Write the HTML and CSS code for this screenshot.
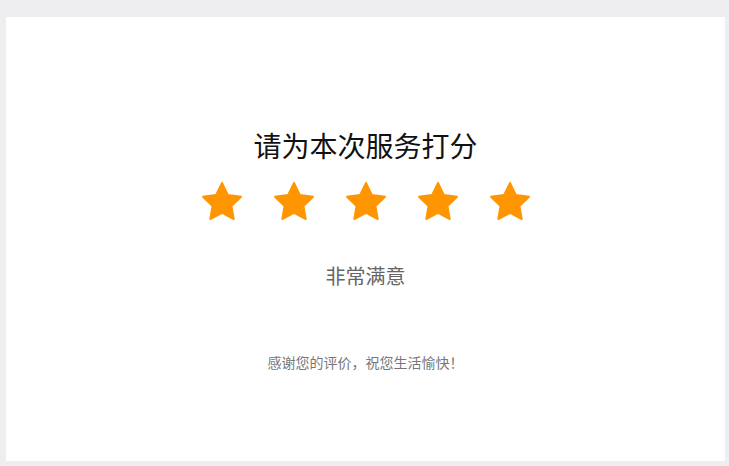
FILE: index.html
```html
<!DOCTYPE html>
<html lang="zh">
<head>
<meta charset="utf-8">
<link rel="stylesheet" href="styles.css">
</head>
<body>
<main class="card">
  <h1 class="title">请为本次服务打分</h1>
  <div class="stars">
    <svg class="star" viewBox="1.5 1.5 21 20"><path d="M12 2l3.09 6.26L22 9.27l-5 4.87 1.18 6.88L12 17.77l-6.18 3.25L7 14.14 2 9.27l6.91-1.01L12 2z"/></svg>
    <svg class="star" viewBox="1.5 1.5 21 20"><path d="M12 2l3.09 6.26L22 9.27l-5 4.87 1.18 6.88L12 17.77l-6.18 3.25L7 14.14 2 9.27l6.91-1.01L12 2z"/></svg>
    <svg class="star" viewBox="1.5 1.5 21 20"><path d="M12 2l3.09 6.26L22 9.27l-5 4.87 1.18 6.88L12 17.77l-6.18 3.25L7 14.14 2 9.27l6.91-1.01L12 2z"/></svg>
    <svg class="star" viewBox="1.5 1.5 21 20"><path d="M12 2l3.09 6.26L22 9.27l-5 4.87 1.18 6.88L12 17.77l-6.18 3.25L7 14.14 2 9.27l6.91-1.01L12 2z"/></svg>
    <svg class="star" viewBox="1.5 1.5 21 20"><path d="M12 2l3.09 6.26L22 9.27l-5 4.87 1.18 6.88L12 17.77l-6.18 3.25L7 14.14 2 9.27l6.91-1.01L12 2z"/></svg>
  </div>
  <p class="label">非常满意</p>
  <p class="thanks">感谢您的评价，祝您生活愉快！</p>
</main>
</body>
</html>
```
FILE: styles.css
```css
html, body {
  margin: 0;
  height: 100%;
}
body {
  background: #eeeef1;
  padding: 17px 4px 5px 6px;
  box-sizing: border-box;
  font-family: "Noto Sans CJK SC", "Noto Sans", sans-serif;
}
.card {
  background: #fff;
  height: 444px;
  box-sizing: border-box;
  padding-top: 114px;
  display: flex;
  flex-direction: column;
  align-items: center;
}
.title {
  margin: 0;
  font-size: 28px;
  line-height: 28px;
  font-weight: 400;
  color: #111;
}
.stars {
  margin-top: 23px;
  display: flex;
  gap: 32px;
}
.star {
  width: 40px;
  height: 38px;
  display: block;
}
.star path {
  fill: #ff9500;
  stroke: #ff9500;
  stroke-width: 1;
  stroke-linejoin: round;
}
.label {
  margin: 46px 0 0;
  font-size: 20px;
  line-height: 20px;
  color: #666;
}
.thanks {
  margin: 69px 0 0;
  font-size: 14px;
  line-height: 14px;
  color: #777;
}
```
